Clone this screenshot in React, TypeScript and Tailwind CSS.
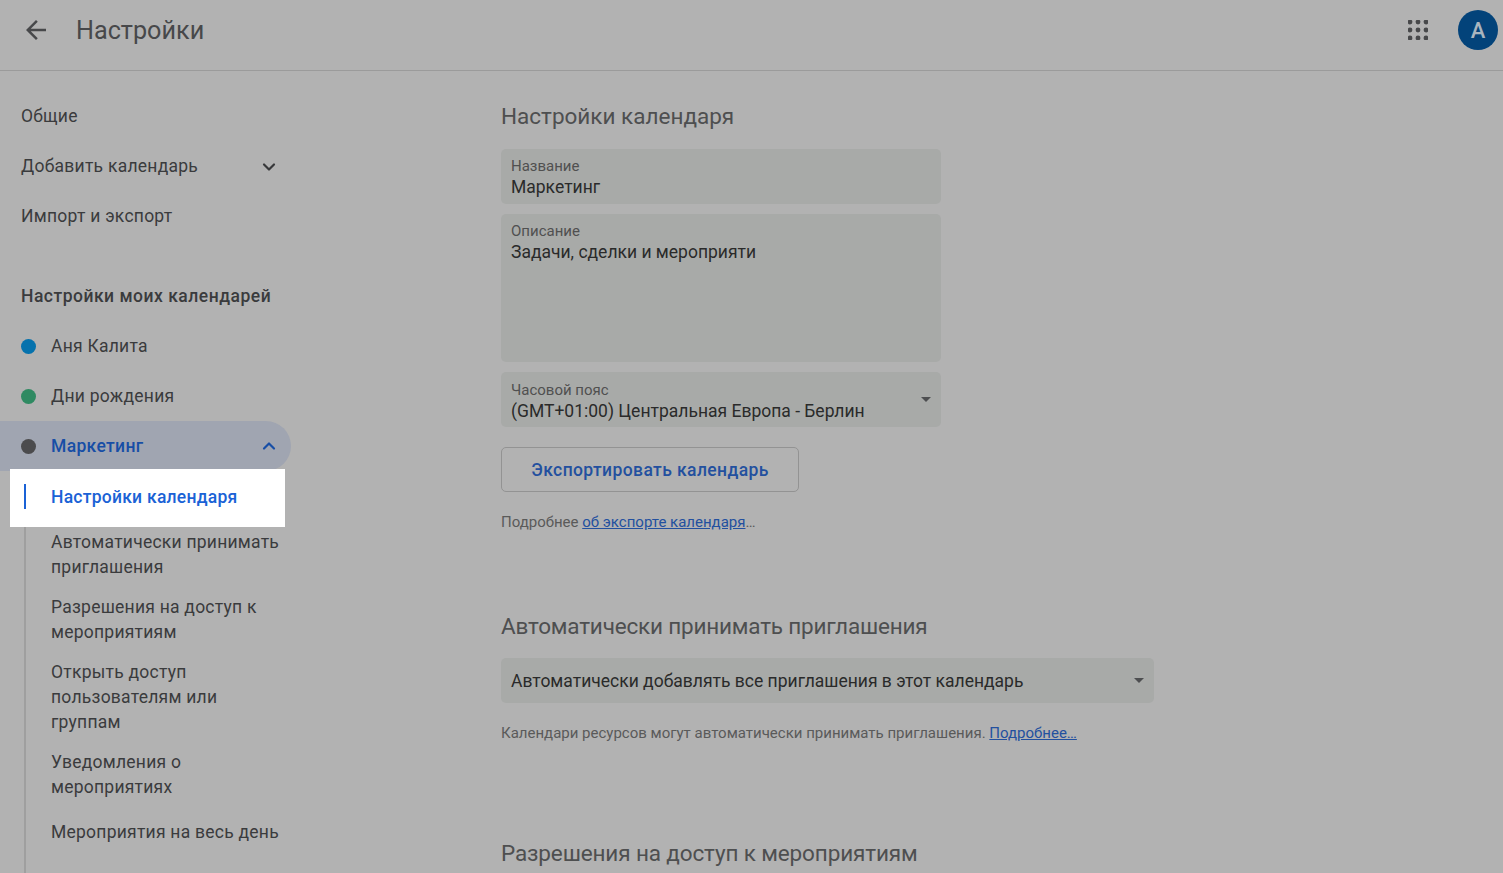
import { ChevronDown, ChevronUp } from 'lucide-react'

const font = { fontFamily: 'Roboto, sans-serif' }

function NavRow({ label, chevron }: { label: string; chevron?: boolean }) {
  return (
    <div className="flex h-[50px] items-center justify-between pl-[21px] pr-[12px] text-[17.5px] tracking-[0.25px] text-[#3a3b3d]">
      <span>{label}</span>
      {chevron && <ChevronDown size={20} strokeWidth={2.6} className="mt-[2px] text-[#37383a]" />}
    </div>
  )
}

function CalendarRow({ label, color }: { label: string; color: string }) {
  return (
    <div className="flex h-[50px] items-center gap-[15px] pl-[21px] text-[17.5px] tracking-[0.25px] text-[#3a3b3d]">
      <span className={`h-[15px] w-[15px] rounded-full ${color}`} />
      <span>{label}</span>
    </div>
  )
}

function SubItem({ lines, className }: { lines: string[]; className?: string }) {
  return (
    <div className={`mb-[15px] pl-[25px] text-[17.5px] leading-[25px] tracking-[0.24px] text-[#3a3b3d] ${className ?? ''}`}>
      {lines.map((l) => (
        <div key={l}>{l}</div>
      ))}
    </div>
  )
}

function Caret({ className }: { className: string }) {
  return (
    <svg width="10" height="5" viewBox="0 0 10 5" className={`absolute right-[10px] ${className}`}>
      <path d="M0 0h10L5 5z" fill="#4d4e50" />
    </svg>
  )
}

function Field({ label, value, className, caret }: { label: string; value: string; className: string; caret?: boolean }) {
  return (
    <div className={`relative w-[440px] rounded-[5px] bg-[#a8aaa8] px-[10px] ${className}`}>
      <div className="text-[15px] leading-[18px] text-[#505050]">{label}</div>
      <div className="text-[17.5px] leading-[25px] text-[#2a2a2a]">{value}</div>
      {caret && <Caret className="top-[25px]" />}
    </div>
  )
}

function Heading({ children, className }: { children: string; className: string }) {
  return <h2 className={`text-[22.5px] leading-[30px] text-[#4e4f50] ${className}`}>{children}</h2>
}

export default function App() {
  return (
    <div style={font} className="h-[873px] w-[1503px] overflow-hidden bg-[#b2b2b2]">
      <header className="flex h-[71px] items-center border-b border-[#9b9b9b] pb-[10px] pl-[21px] pr-[5px]">
        <svg width="30" height="30" viewBox="0 0 24 24" fill="#47484a">
          <path d="M20 11H7.83l5.59-5.59L12 4l-8 8 8 8 1.41-1.41L7.83 13H20v-2z" />
        </svg>
        <h1 className="ml-[25px] flex-1 pt-[2px] text-[25.2px] text-[#47484a]">Настройки</h1>
        <svg width="20" height="20" viewBox="0 0 20 20" className="mr-[30px]" fill="#47484a">
          {[2, 10, 18].flatMap((y) =>
            [2, 10, 18].map((x) => <circle key={`${x}-${y}`} cx={x} cy={y} r="2.4" />),
          )}
        </svg>
        <div className="flex h-[40px] w-[40px] items-center justify-center rounded-full bg-[#03437a] text-[22px] font-medium text-[#a9b5bf]">
          A
        </div>
      </header>

      <div className="flex">
        <aside className="w-[291px] shrink-0 pt-[20px]">
          <NavRow label="Общие" />
          <NavRow label="Добавить календарь" chevron />
          <NavRow label="Импорт и экспорт" />
          <div className="mt-[30px] flex h-[50px] items-center pl-[21px] text-[17.5px] font-medium tracking-[0.5px] text-[#3a3b3d]">
            Настройки моих календарей
          </div>
          <CalendarRow label="Аня Калита" color="bg-[#0572ad]" />
          <CalendarRow label="Дни рождения" color="bg-[#2f8a62]" />
          <div className="flex h-[50px] items-center justify-between rounded-r-[25px] bg-[#a0a5b1] pl-[21px] pr-[12px] text-[17.5px] font-medium tracking-[0.33px] text-[#174ea6]">
            <span className="flex items-center gap-[15px]">
              <span className="h-[15px] w-[15px] rounded-full bg-[#4b4b4d]" />
              Маркетинг
            </span>
            <ChevronUp size={20} strokeWidth={2.6} />
          </div>
          <div className="relative -mt-[2px] ml-[10px] flex h-[58px] w-[275px] items-center bg-white pb-[2px] pl-[41px] text-[17.5px] font-medium tracking-[0.25px] text-[#1a62d6]">
            Настройки календаря
            <span className="absolute top-[15px] left-[14px] h-[25px] w-[2px] bg-[#1a62d6]" />
          </div>
          <div className="ml-[24px] border-l-2 border-[#9f9f9f] pt-[2.5px] pb-[40px]">
            <SubItem lines={['Автоматически принимать', 'приглашения']} />
            <SubItem lines={['Разрешения на доступ к', 'мероприятиям']} />
            <SubItem lines={['Открыть доступ', 'пользователям или', 'группам']} />
            <SubItem lines={['Уведомления о', 'мероприятиях']} />
            <SubItem lines={['Мероприятия на весь день']} className="mt-[20px]" />
          </div>
        </aside>

        <main className="ml-[210px] flex-1 pt-[30px]">
          <Heading className="mb-[18px]">Настройки календаря</Heading>
          <div className="flex flex-col gap-[10px]">
            <Field label="Название" value="Маркетинг" className="h-[55px] pt-[8px]" />
            <Field label="Описание" value="Задачи, сделки и мероприяти" className="h-[148px] pt-[8px]" />
            <Field label="Часовой пояс" value="(GMT+01:00) Центральная Европа - Берлин" className="h-[55px] pt-[9px]" caret />
          </div>
          <button className="mt-[20px] h-[45px] w-[298px] rounded-[5px] border border-[#939393] pt-[1px] text-[17.5px] font-medium tracking-[0.4px] text-[#23509f]">
            Экспортировать календарь
          </button>
          <p className="mt-[21px] text-[15px] leading-[18px] text-[#5a5a5a]">
            Подробнее <a className="text-[#23509f] underline">об экспорте календаря</a>…
          </p>

          <Heading className="mt-[80px] tracking-[-0.19px]">Автоматически принимать приглашения</Heading>
          <div className="relative mt-[17px] flex h-[45px] w-[653px] items-center rounded-[5px] bg-[#a8aaa8] px-[10px] pt-[2px] text-[17.5px] text-[#2a2a2a]">
            Автоматически добавлять все приглашения в этот календарь
            <Caret className="top-[20px]" />
          </div>
          <p className="mt-[21px] text-[15px] leading-[18px] text-[#5a5a5a]">
            Календари ресурсов могут автоматически принимать приглашения.{' '}
            <a className="text-[#23509f] underline">Подробнее…</a>
          </p>

          <Heading className="mt-[96px] tracking-[-0.13px]">Разрешения на доступ к мероприятиям</Heading>
        </main>
      </div>
    </div>
  )
}
